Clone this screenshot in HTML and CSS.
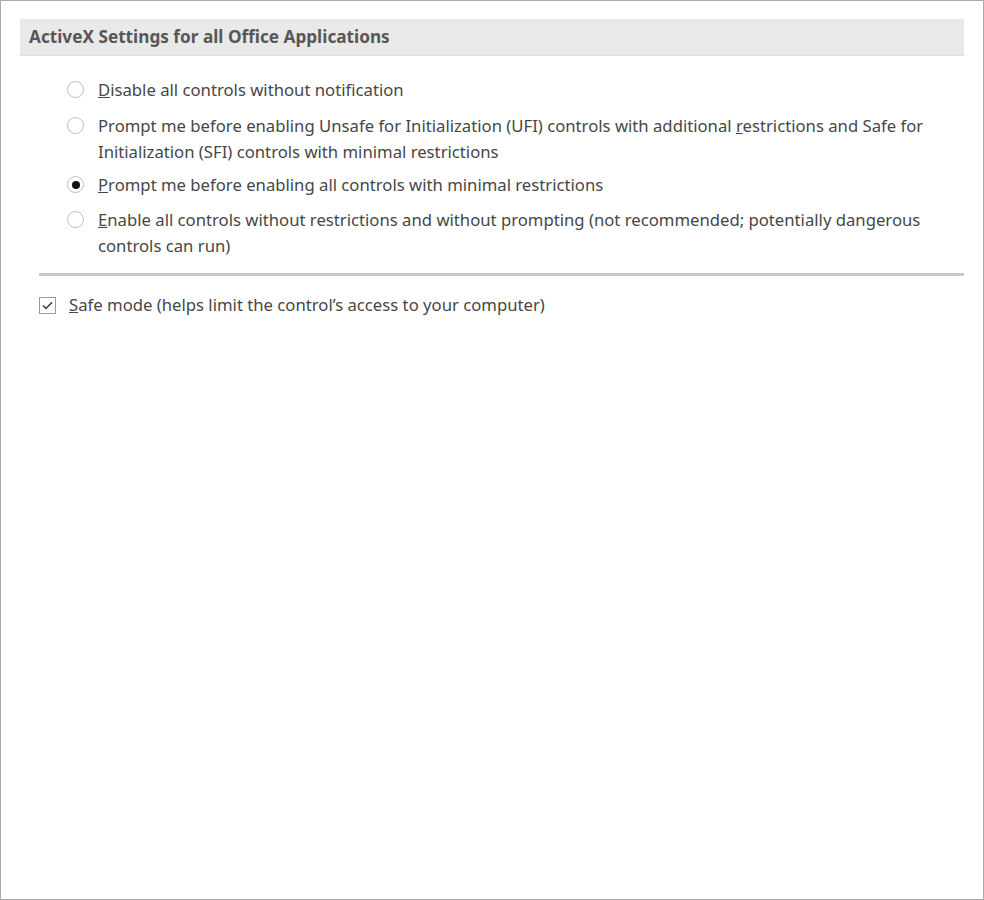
FILE: index.html
```html
<!DOCTYPE html>
<html>
<head>
<meta charset="utf-8">
<link rel="stylesheet" href="styles.css">
</head>
<body>
<div class="frame">
  <div class="section-header">ActiveX Settings for all Office Applications</div>
  <div class="options">
    <label class="option">
      <span class="radio"></span>
      <span class="text"><u>D</u>isable all controls without notification</span>
    </label>
    <label class="option opt-2">
      <span class="radio"></span>
      <span class="text">Prompt me before enabling Unsafe for Initialization (UFI) controls with additional <u>r</u>estrictions and Safe for Initialization (SFI) controls with minimal restrictions</span>
    </label>
    <label class="option opt-3">
      <span class="radio checked"></span>
      <span class="text"><u>P</u>rompt me before enabling all controls with minimal restrictions</span>
    </label>
    <label class="option">
      <span class="radio"></span>
      <span class="text"><u>E</u>nable all controls without restrictions and without prompting (not recommended; potentially dangerous controls can run)</span>
    </label>
  </div>
  <div class="separator"></div>
  <label class="check-row">
    <span class="checkbox">
      <svg width="11" height="9" viewBox="0 0 11 9"><path d="M1 4.5 L4 7.5 L10 1.2" fill="none" stroke="#333" stroke-width="1.4"/></svg>
    </span>
    <span class="text"><u>S</u>afe mode (helps limit the control’s access to your computer)</span>
  </label>
</div>
</body>
</html>
```
FILE: styles.css
```css
html, body {
  margin: 0;
  padding: 0;
  background: #ffffff;
}
.frame {
  box-sizing: border-box;
  width: 984px;
  height: 900px;
  border: 1px solid #ababab;
  padding: 18px 19px 0 19px;
  font-family: "Noto Sans", "Open Sans", sans-serif;
  font-size: 16.7px;
  color: #474747;
}
.section-header {
  background: #e9e9e9;
  border-bottom: 1px solid #dedede;
  height: 36px;
  line-height: 36px;
  padding-left: 9px;
  font-weight: bold;
  font-size: 17.2px;
  color: #575757;
}
.options {
  display: flex;
  flex-direction: column;
  gap: 9px;
  padding: 21px 30px 0 47px;
}
.option {
  display: flex;
  align-items: flex-start;
  gap: 14px;
  line-height: 26px;
}
.opt-2 {
  margin-top: 1px;
}
.opt-3 {
  margin-top: -2px;
}
.radio {
  flex: none;
  box-sizing: border-box;
  width: 17px;
  height: 17px;
  margin-top: 4px;
  border: 1.5px solid #bdbdbd;
  border-radius: 50%;
  background: #fff;
  display: flex;
  align-items: center;
  justify-content: center;
}
.radio.checked::after {
  content: "";
  width: 8px;
  height: 8px;
  border-radius: 50%;
  background: #111;
}
.text u {
  text-decoration: underline;
  text-decoration-thickness: 1px;
  text-underline-offset: 1px;
}
.separator {
  height: 3px;
  background: #c8c8c8;
  margin: 14px 0 0 19px;
}
.check-row {
  display: flex;
  align-items: center;
  gap: 13px;
  margin: 16px 0 0 19px;
  line-height: 26px;
}
.checkbox {
  flex: none;
  box-sizing: border-box;
  width: 17px;
  height: 17px;
  border: 1px solid #9a9a9a;
  background: #fff;
  display: flex;
  align-items: center;
  justify-content: center;
}
```
